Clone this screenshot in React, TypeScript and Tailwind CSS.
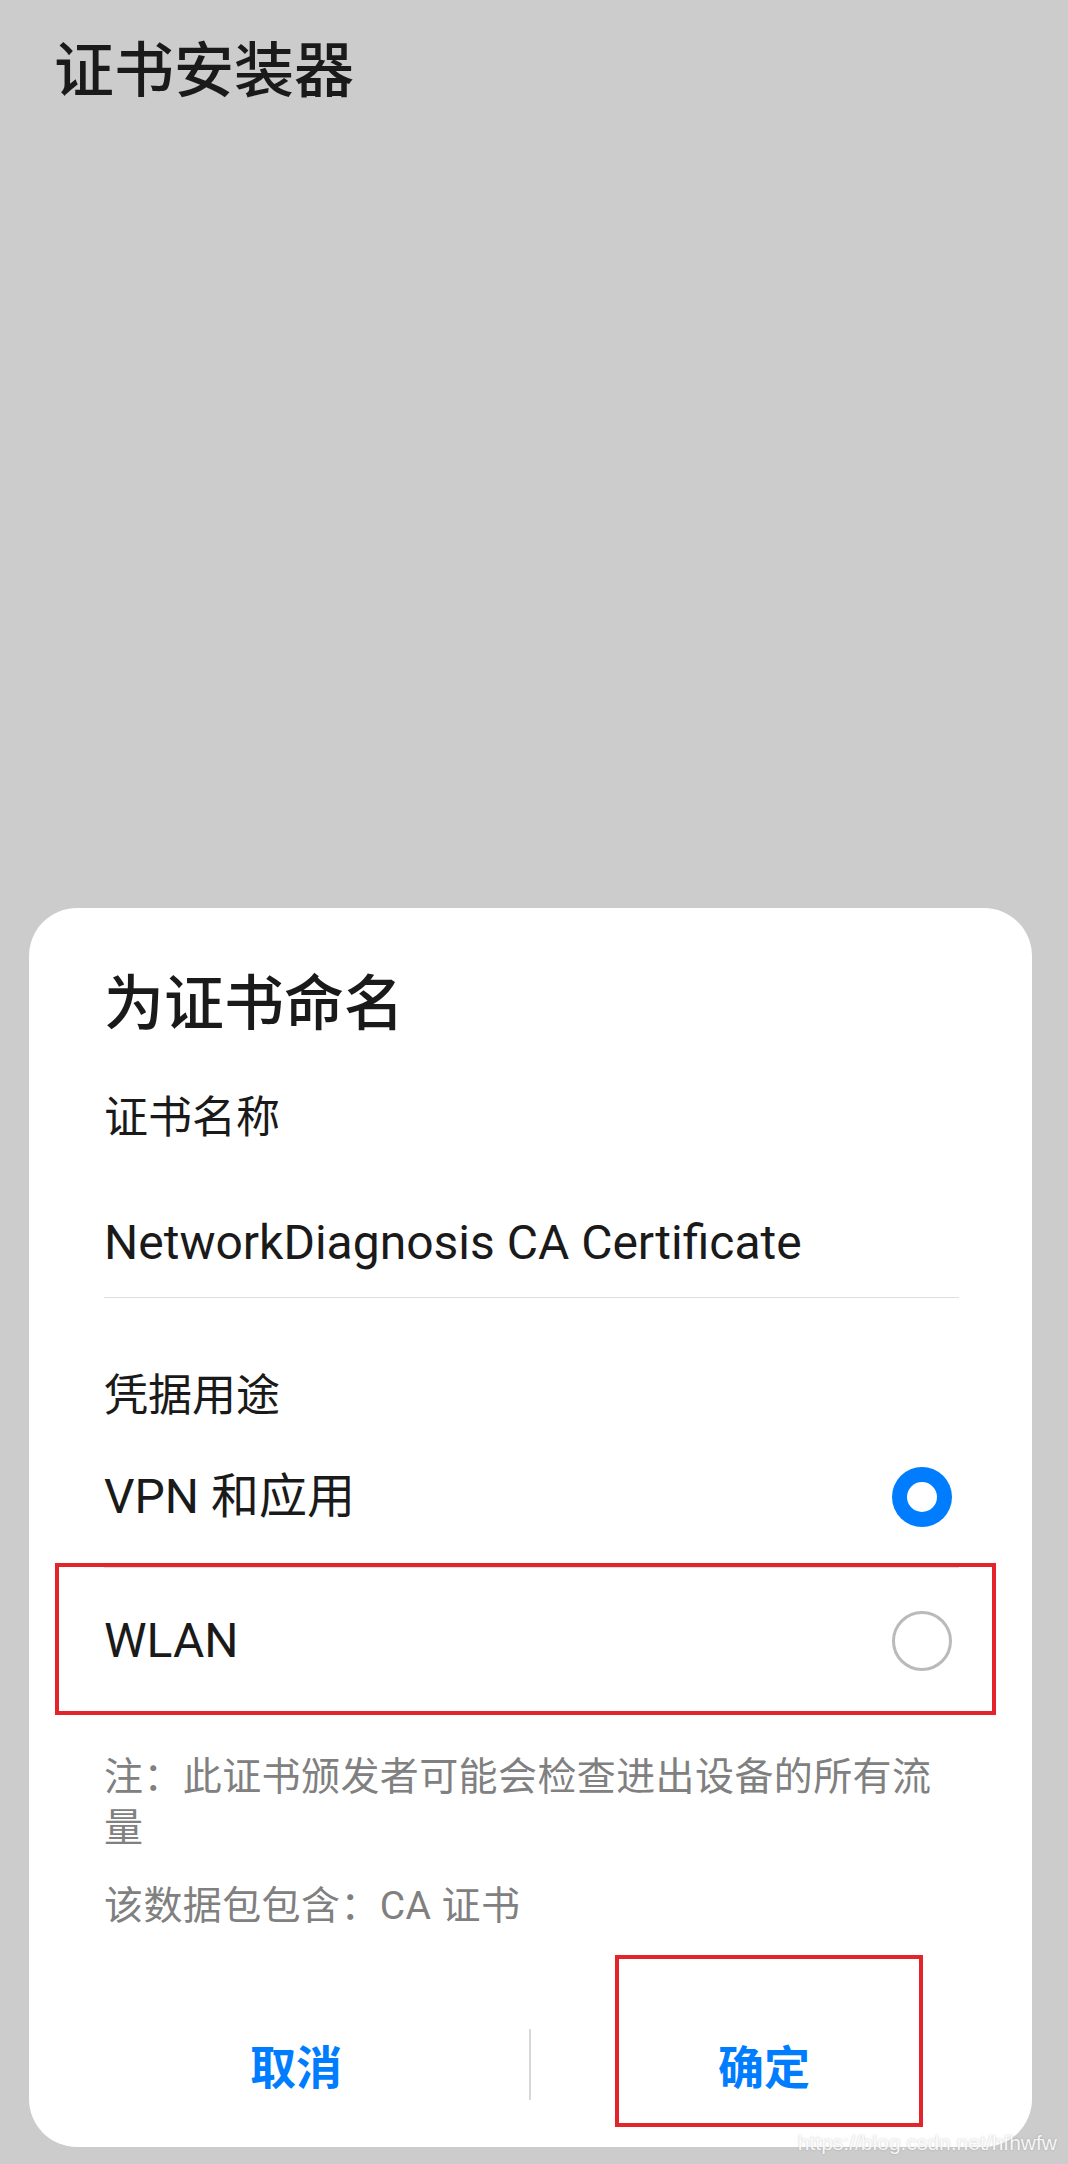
import React from 'react';

const cjk = { fontFamily: '"Noto Sans CJK SC", sans-serif' };
const mixed = { fontFamily: 'Roboto, "Noto Sans CJK SC", sans-serif' };

function Radio({ checked }: { checked: boolean }) {
  if (checked) {
    return (
      <div className="mr-[7px] flex h-[60px] w-[60px] items-center justify-center rounded-full bg-[#007dff]">
        <div className="h-[30px] w-[30px] rounded-full bg-white" />
      </div>
    );
  }
  return <div className="mr-[7px] h-[60px] w-[60px] rounded-full border-[3px] border-[#bababa] bg-white" />;
}

export default function App() {
  return (
    <div className="relative flex h-[2164px] w-[1068px] flex-col justify-between bg-[#cccccc]" style={mixed}>
      {/* Page header */}
      <div className="pl-[54px] pt-[36px]">
        <h1 className="text-[60px] font-medium leading-[60px] text-[#1a1a1a]" style={cjk}>
          证书安装器
        </h1>
      </div>

      {/* Dialog */}
      <div className="relative mb-[17px] ml-[29px] mr-[36px] rounded-[48px] bg-white pl-[75px] pr-[73px] pt-[42px]">
        <div className="flex h-[98px] items-center">
          <h2 className="text-[60px] font-medium leading-[70px] text-[#1a1a1a]" style={cjk}>
            为证书命名
          </h2>
        </div>

        <div className="flex h-[140px] items-center">
          <span className="text-[44px] leading-[60px] text-[#1a1a1a]">证书名称</span>
        </div>

        <div className="flex h-[109px] items-center">
          <span className="text-[48px] leading-[60px] text-[#1a1a1a]">NetworkDiagnosis CA Certificate</span>
        </div>
        <div className="h-px bg-[#dedede]" />

        <div className="h-[128px] pt-[68px]">
          <div className="text-[44px] leading-[60px] text-[#1a1a1a]">凭据用途</div>
        </div>

        <div className="flex h-[141px] items-center justify-between">
          <span className="text-[48px] leading-[60px] text-[#1a1a1a]">VPN 和应用</span>
          <Radio checked />
        </div>
        <div className="h-px bg-[#dedede]" />

        <div className="flex h-[146px] items-center justify-between">
          <span className="text-[48px] leading-[60px] text-[#1a1a1a]">WLAN</span>
          <Radio checked={false} />
        </div>

        <div className="pt-[38px] text-[39px] leading-[51px] tracking-[0.4px] text-[#808080]">
          注：此证书颁发者可能会检查进出设备的所有流量
        </div>
        <div className="pt-[27px] text-[39px] leading-[51px] tracking-[0.4px] text-[#808080]">
          该数据包包含：CA 证书
        </div>

        <div className="-ml-[41px] -mr-[38px] mt-[68px] flex h-[128px] items-center">
          <button className="flex-1 text-[46px] font-bold leading-[60px] text-[#007dff]" style={cjk}>
            取消
          </button>
          <div className="h-[71px] w-[2px] bg-[#d8d8d8]" />
          <button className="flex-1 text-[46px] font-bold leading-[60px] text-[#007dff]" style={cjk}>
            确定
          </button>
        </div>
        <div className="h-[19px]" />

        {/* annotation boxes */}
        <div className="pointer-events-none absolute left-[26px] top-[655px] h-[152px] w-[941px] border-[4px] border-[#e3242b]" />
        <div className="pointer-events-none absolute left-[586px] top-[1047px] h-[172px] w-[308px] border-[4px] border-[#e3242b]" />
      </div>

      <div
        className="absolute bottom-[9px] right-[11px] text-[21px] leading-[24px] text-white/90 [text-shadow:0_0_2px_rgba(0,0,0,0.25)]"
        style={{ fontFamily: '"Liberation Sans", sans-serif' }}
      >
        https://blog.csdn.net/hfhwfw
      </div>
    </div>
  );
}
